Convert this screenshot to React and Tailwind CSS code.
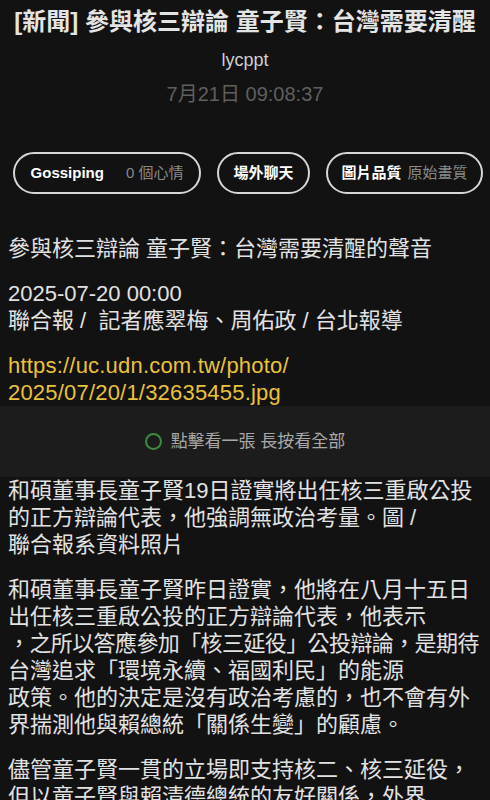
const FONT = { fontFamily: '"Liberation Sans", "Noto Sans CJK TC", sans-serif' };

function Pill({ children, className }) {
  return (
    <div
      className={
        "flex h-[42px] shrink-0 items-center justify-center whitespace-nowrap rounded-full border-2 border-[#d6d6d6] text-[15px] font-bold text-white " +
        className
      }
    >
      {children}
    </div>
  );
}

const para1 = [
  "和碩董事長童子賢19日證實將出任核三重啟公投",
  "的正方辯論代表，他強調無政治考量。圖 /",
  "聯合報系資料照片",
];

const para2 = [
  "和碩董事長童子賢昨日證實，他將在八月十五日",
  "出任核三重啟公投的正方辯論代表，他表示",
  "，之所以答應參加「核三延役」公投辯論，是期待",
  "台灣追求「環境永續、福國利民」的能源",
  "政策。他的決定是沒有政治考慮的，也不會有外",
  "界揣測他與賴總統「關係生變」的顧慮。",
];

const para3 = [
  "儘管童子賢一貫的立場即支持核二、核三延役，",
  "但以童子賢與賴清德總統的友好關係，外界",
];

// the one over-long line is squeezed a little so it stays inside the screen
const TIGHT = "，之所以答應參加「核三延役」公投辯論，是期待";

function Lines({ lines }) {
  return (
    <div className="flex flex-col">
      {lines.map((l) => (
        <div
          key={l}
          className={
            l === TIGHT
              ? "h-[27px] whitespace-pre leading-[27px] tracking-[-0.6px]"
              : "h-[27px] whitespace-pre leading-[27px]"
          }
        >
          {l}
        </div>
      ))}
    </div>
  );
}

export default function App() {
  return (
    <div
      className="h-[800px] w-[490px] overflow-hidden bg-[#121212] text-[#e2e2e2]"
      style={FONT}
    >
      <div className="flex flex-col items-center pt-[7px]">
        <div className="whitespace-nowrap text-[24px] font-bold leading-[30px] text-[#e4e4e4]">
          [新聞] 參與核三辯論 童子賢：台灣需要清醒
        </div>
        <div className="mt-[12px] text-[18px] leading-[22px] text-[#d0d0d0]">lycppt</div>
        <div className="mt-[11px] text-[20px] leading-[24px] text-[#5f5f5f]">7月21日 09:08:37</div>
      </div>

      <div className="mt-[46px] flex gap-4 px-[13px]">
        <Pill className="w-[188px] gap-[22px]">
          <span>Gossiping</span>
          <span className="font-normal text-[#8a8a8a]">0 個心情</span>
        </Pill>
        <Pill className="w-[93px]">場外聊天</Pill>
        <Pill className="w-[157px] gap-[6px]">
          <span>圖片品質</span>
          <span className="font-normal text-[#8a8a8a]">原始畫質</span>
        </Pill>
      </div>

      <div className="mt-[41px] px-2 text-[22px]">
        <Lines lines={["參與核三辯論 童子賢：台灣需要清醒的聲音"]} />
        <div className="mt-[18px]">
          <Lines lines={["2025-07-20 00:00", "聯合報 /  記者應翠梅、周佑政 / 台北報導"]} />
        </div>
        <div className="mt-[18px] text-[#e9c23a] tracking-[0.2px]">
          <Lines lines={["https://uc.udn.com.tw/photo/", "2025/07/20/1/32635455.jpg"]} />
        </div>
      </div>

      <div className="flex h-[71px] items-center justify-center gap-[9px] bg-[#1c1c1c]">
        <div className="h-[17px] w-[17px] rounded-full border-2 border-[#3d8a42]" />
        <span className="text-[17px] text-[#a8a8a8]">點擊看一張 長按看全部</span>
      </div>

      <div className="px-2 text-[22px]">
        <Lines lines={para1} />
        <div className="mt-[18px]">
          <Lines lines={para2} />
        </div>
        <div className="mt-[18px]">
          <Lines lines={para3} />
        </div>
      </div>
    </div>
  );
}
